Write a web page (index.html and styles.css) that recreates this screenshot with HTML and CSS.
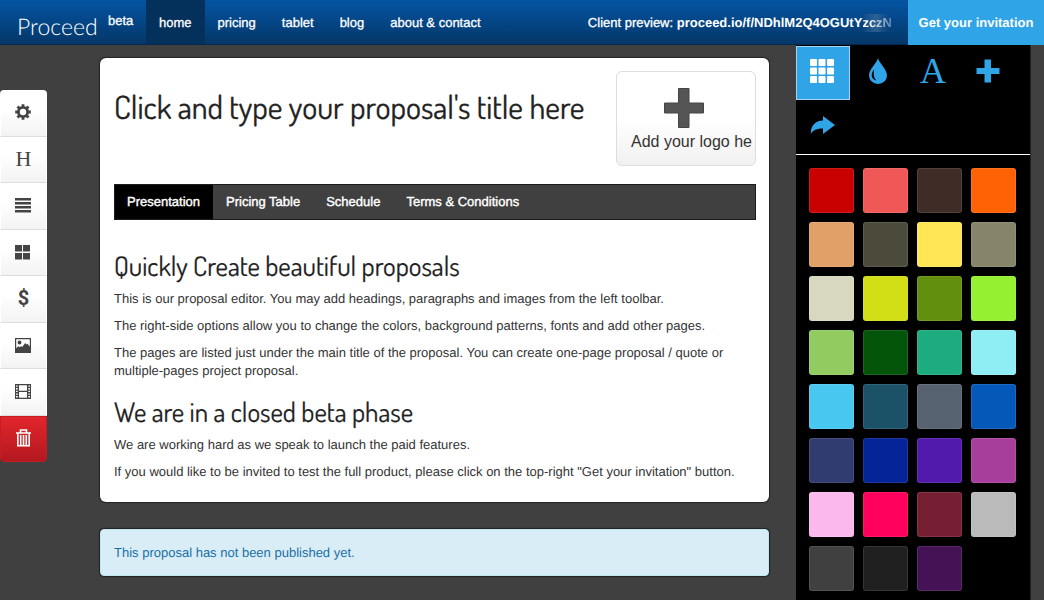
FILE: index.html
```html
<!DOCTYPE html>
<html lang="en">
<head>
<meta charset="utf-8">
<title>Proceed</title>
<meta name="viewport" content="width=device-width, initial-scale=1">
<link rel="stylesheet" href="styles.css">
</head>
<body>
<header class="topbar">
  <a class="brand" href="#">Proceed</a>
  <span class="beta">beta</span>
  <nav class="mainnav">
    <a class="active" href="#">home</a>
    <a href="#">pricing</a>
    <a href="#">tablet</a>
    <a href="#">blog</a>
    <a href="#">about &amp; contact</a>
  </nav>
  <p class="preview">Client preview: <a href="#">proceed.io/f/NDhlM2Q4OGUtY<span class="fade">zczN</span></a></p>
  <a class="invite" href="#">Get your invitation</a>
</header>
<div class="workspace">
  <div class="tools" role="toolbar" aria-label="Add content">
    <button type="button" aria-label="Settings"><svg viewBox="0 0 18 18" width="18" height="18"><g fill="currentColor"><circle cx="9" cy="9" r="6"/><path d="M7.6 1.2h2.8v15.6H7.6z"/><path d="M7.6 1.2h2.8v15.6H7.6z" transform="rotate(45 9 9)"/><path d="M7.6 1.2h2.8v15.6H7.6z" transform="rotate(90 9 9)"/><path d="M7.6 1.2h2.8v15.6H7.6z" transform="rotate(135 9 9)"/></g><circle cx="9" cy="9" r="3.2" fill="#fdfdfd"/></svg></button>
    <button type="button" class="heading-tool" aria-label="Heading">H</button>
    <button type="button" aria-label="Paragraph"><svg viewBox="0 0 18 18" width="18" height="18"><path fill="currentColor" d="M1 2h16v2.500H1zM1 6h16v2.500H1zM1 10h16v2.500H1zM1 14h16v2.500H1z"/></svg></button>
    <button type="button" aria-label="Columns"><svg viewBox="0 0 18 18" width="18" height="18"><path fill="currentColor" d="M1 2h7v6.500H1zM9 2h7v6.500H9zM1 10h7v6.500H1zM9 10h7v6.500H9z"/></svg></button>
    <button type="button" class="price-tool" aria-label="Price">$</button>
    <button type="button" aria-label="Image"><svg viewBox="0 0 18 18" width="18" height="18"><path fill="currentColor" fill-rule="evenodd" d="M1 2h16v15H1zM2.200 3.200v9l2-2 1.500 1 1.200-1.200 1.300 1 3-4 1.300 1.500 1-.8 2.300 3V3.200z"/><circle cx="5.500" cy="6.500" r="1.900" fill="currentColor"/></svg></button>
    <button type="button" aria-label="Video"><svg viewBox="0 0 18 18" width="18" height="18"><path fill="currentColor" fill-rule="evenodd" d="M1 2h16v15H1zM5 3.200v5.600h8V3.200zM5 10v5.800h8V10zM2 3.400v1.400h1.700V3.400zM2 6v1.400h1.700V6zM2 8.700v1.400h1.700V8.700zM2 11.400v1.400h1.700v-1.400zM2 14v1.400h1.700V14zM14.300 3.400v1.400H16V3.400zM14.300 6v1.400H16V6zM14.300 8.700v1.400H16V8.700zM14.300 11.400v1.400H16v-1.400zM14.300 14v1.400H16V14z"/></svg></button>
    <button type="button" class="trash" aria-label="Delete"><svg viewBox="0 0 18 20" width="18" height="20"><g fill="none" stroke="currentColor" stroke-width="1.600"><path d="M2 5h15M6.500 4.500V2h6v2.500M3.800 5v12.700h11.400V5M6.700 7v10M9.500 7v10M12.300 7v10"/></g></svg></button>
  </div>

  <main class="content">
    <article class="sheet">
      <div class="sheet-head">
        <h1 contenteditable="true" spellcheck="false">Click and type your proposal's title here</h1>
        <button type="button" class="logo-drop"><svg viewBox="0 0 40 40" width="40" height="40"><path fill="#555" stroke="#444" d="M14.500.5h10.500V15h14.500v10H25v14.500H14.500V25H.5V15h14z"/></svg><span>Add your logo he</span></button>
      </div>
      <nav class="pages">
        <a class="active" href="#">Presentation</a>
        <a href="#">Pricing Table</a>
        <a href="#">Schedule</a>
        <a href="#">Terms &amp; Conditions</a>
      </nav>
      <section>
        <h2>Quickly Create beautiful proposals</h2>
        <p>This is our proposal editor. You may add headings, paragraphs and images from the left toolbar.</p>
        <p>The right-side options allow you to change the colors, background patterns, fonts and add other pages.</p>
        <p>The pages are listed just under the main title of the proposal. You can create one-page proposal / quote or multiple-pages project proposal.</p>
      </section>
      <section>
        <h2>We are in a closed beta phase</h2>
        <p>We are working hard as we speak to launch the paid features.</p>
        <p>If you would like to be invited to test the full product, please click on the top-right "Get your invitation" button.</p>
      </section>
    </article>
    <p class="notice">This proposal has not been published yet.</p>
  </main>

  <aside class="panel">
    <div class="tabs">
      <button type="button" class="active" aria-label="Colors"><svg viewBox="0 0 24 24" width="24" height="24"><g fill="currentColor"><rect width="7" height="7" rx="1"/><rect x="8.500" width="7" height="7" rx="1"/><rect x="17" width="7" height="7" rx="1"/><rect y="8.500" width="7" height="7" rx="1"/><rect x="8.500" y="8.500" width="7" height="7" rx="1"/><rect x="17" y="8.500" width="7" height="7" rx="1"/><rect y="17" width="7" height="7" rx="1"/><rect x="8.500" y="17" width="7" height="7" rx="1"/><rect x="17" y="17" width="7" height="7" rx="1"/></g></svg></button>
      <button type="button" aria-label="Background"><svg viewBox="0 0 20 28" width="20" height="28"><path fill="currentColor" d="M10 1c1 5 9 11 9 17.500a9 8.500 0 0 1-18 0C1 12 9 6 10 1z"/><path fill="#000" d="M6 12.500c-4 5-2.500 10 2.500 11C5.500 21 5.500 17 6 12.500z"/></svg></button>
      <button type="button" class="font-tab" aria-label="Fonts">A</button>
      <button type="button" aria-label="Add page"><svg viewBox="0 0 24 24" width="24" height="24"><path fill="currentColor" d="M8.500.5h6.500v8.500h8.500v6H15v8.500H8.500V15H.5V9h8z"/></svg></button>
      <button type="button" aria-label="Share"><svg viewBox="0 0 26 20" width="26" height="20"><path fill="currentColor" d="M13 1l12 9-12 9v-5.500C7 13.500 3 15 .8 19 .5 10 6 5.500 13 5.500z"/></svg></button>
    </div>
    <div class="swatches">
      <button type="button" class="c01" aria-label="Red"></button>
      <button type="button" class="c02" aria-label="Coral"></button>
      <button type="button" class="c03" aria-label="Brown"></button>
      <button type="button" class="c04" aria-label="Orange"></button>
      <button type="button" class="c05" aria-label="Tan"></button>
      <button type="button" class="c06" aria-label="Dark olive"></button>
      <button type="button" class="c07" aria-label="Yellow"></button>
      <button type="button" class="c08" aria-label="Khaki"></button>
      <button type="button" class="c09" aria-label="Ivory"></button>
      <button type="button" class="c10" aria-label="Lemon"></button>
      <button type="button" class="c11" aria-label="Olive green"></button>
      <button type="button" class="c12" aria-label="Lime"></button>
      <button type="button" class="c13" aria-label="Light green"></button>
      <button type="button" class="c14" aria-label="Dark green"></button>
      <button type="button" class="c15" aria-label="Emerald"></button>
      <button type="button" class="c16" aria-label="Aqua"></button>
      <button type="button" class="c17" aria-label="Sky blue"></button>
      <button type="button" class="c18" aria-label="Petrol"></button>
      <button type="button" class="c19" aria-label="Slate"></button>
      <button type="button" class="c20" aria-label="Blue"></button>
      <button type="button" class="c21" aria-label="Indigo"></button>
      <button type="button" class="c22" aria-label="Royal blue"></button>
      <button type="button" class="c23" aria-label="Violet"></button>
      <button type="button" class="c24" aria-label="Orchid"></button>
      <button type="button" class="c25" aria-label="Light pink"></button>
      <button type="button" class="c26" aria-label="Hot pink"></button>
      <button type="button" class="c27" aria-label="Burgundy"></button>
      <button type="button" class="c28" aria-label="Silver"></button>
      <button type="button" class="c29" aria-label="Charcoal"></button>
      <button type="button" class="c30" aria-label="Black"></button>
      <button type="button" class="c31" aria-label="Purple"></button>
    </div>
  </aside>
</div>
</body>
</html>
```

FILE: styles.css
```css
* { box-sizing: border-box; }
body {
  margin: 0;
  min-height: 100vh;
  display: flex;
  flex-direction: column;
  background: #404040;
  color: #333;
  font: 13px/18px "Liberation Sans", Arial, sans-serif;
  text-rendering: geometricPrecision;
}
a { color: inherit; text-decoration: none; }
button { font: inherit; color: inherit; margin: 0; padding: 0; border: 0; cursor: pointer; }
svg { display: block; }
h1, h2, p { margin: 0; }

.topbar {
  display: flex;
  height: 45px;
  background: linear-gradient(#0454a3, #043768);
  border-bottom: 1px solid #032a50;
  color: #fff;
  line-height: 46px;
  white-space: nowrap;
  -webkit-text-stroke: 0.3px currentColor;
}
.brand {
  padding: 4px 0 0 17px;
  width: 108px;
  font: 300 23px/44px Lato, sans-serif;
  -webkit-text-stroke: 0;
}
.beta { width: 38px; line-height: 42px; }
.mainnav { display: flex; }
.mainnav a { height: 44px; padding: 0 13px; }
.mainnav .active { background: #04305c; }
.preview { margin-left: auto; padding-right: 16px; }
.preview a { font-weight: bold; -webkit-text-stroke: 0; }
.fade {
  display: inline-block;
  height: 18px;
  line-height: 18px;
  background: linear-gradient(90deg, #2e66a000, #3c6797 50%, #2e5e9200);
  mask-image: linear-gradient(90deg, #000 20%, rgba(0, 0, 0, 0.3));
}
.invite { width: 136px; margin-bottom: -1px; text-align: center; font-weight: bold; background: #2fa4e7; -webkit-text-stroke: 0; }

.workspace { flex: 1; display: flex; align-items: flex-start; }
.tools {
  width: 47px;
  margin-top: 45px;
  display: flex;
  flex-direction: column;
  border-radius: 4px;
  overflow: hidden;
  color: #444;
}
.tools button {
  height: 47px;
  display: grid;
  place-items: center;
  padding: 0 2px 3px 0;
  background: linear-gradient(#fff 40%, #f3f3f3);
  border: 1px solid #fff;
  border-bottom-color: #ddd;
}
.tools button:nth-child(even) { height: 46px; }
.tools .heading-tool { padding-right: 0; font: 22px/24px "Liberation Serif", serif; }
.tools .price-tool { padding-right: 0; font: bold 20px/24px Roboto, sans-serif; }
.tools .trash { height: 47px; color: #fff; background: linear-gradient(#e1262c, #b4181f); border-color: #c51d23; border-radius: 0 0 4px 4px; }

.content { flex: 1; min-width: 0; margin: 13px 27px 24px 53px; }
.sheet {
  padding: 13px 13px 12px 14px;
  background: #fff;
  border-radius: 6px;
  box-shadow: 0 0 1px 1px #222;
}
.sheet-head { display: flex; justify-content: space-between; align-items: flex-start; margin-bottom: 18px; }
h1, h2 { font-family: Dosis, "Liberation Sans Narrow", Roboto, sans-serif; font-weight: 400; color: #222; }
h1 { padding-top: 16px; font-size: 32px; line-height: 40px; white-space: nowrap; outline: none; -webkit-text-stroke: 0.3px currentColor; }
.logo-drop {
  flex: none;
  width: 140px;
  height: 95px;
  padding: 6px 0 0 14px;
  text-align: left;
  background: linear-gradient(#fff 50%, #f1f1f1);
  border: 1px solid #ddd;
  border-radius: 6px;
  font-size: 16px;
  line-height: 28px;
  white-space: nowrap;
}
.logo-drop svg { margin-left: 33px; }
.pages {
  display: flex;
  margin-bottom: 26px;
  background: #404040;
  border: 1px solid #1c1c1c;
  color: #fff;
  line-height: 34px;
  -webkit-text-stroke: 0.4px currentColor;
}
.pages a { padding: 0 13px; }
.pages .active { background: #000; padding-left: 12px; }
h2 { font-size: 27px; line-height: 40px; -webkit-text-stroke: 0.2px currentColor; }
.sheet p { margin-bottom: 9px; }
.sheet section { margin-bottom: 12px; }
.sheet section:last-child { margin-bottom: 0; }
section h2 { margin-bottom: 4px; }
.notice {
  margin-top: 27px;
  padding: 14px 13px 13px;
  background: #d9edf7;
  border: 1px solid #bce8f1;
  border-radius: 4px;
  color: #1a6fa3;
  box-shadow: 0 0 1px 1px #222;
}

.panel { width: 235px; margin-right: 13px; align-self: stretch; background: #000; border-right: 1px solid #222; }
.tabs { display: flex; flex-wrap: wrap; align-content: flex-start; gap: 0 1px; height: 110px; padding-top: 1px; border-bottom: 1px solid #fff; color: #2fa4e7; }
.tabs button { width: 54px; height: 54px; display: grid; place-items: center; padding: 0 0 4px; background: #000; }
.tabs .active { color: #fff; background: #2fa4e7; border: 1px solid #a5d5f3; padding-right: 2px; }
.tabs .font-tab { font: 36px/48px "Liberation Serif", serif; }
.swatches { display: grid; grid-template-columns: repeat(4, 45px); gap: 9px; padding: 13px 13px 10px; }
.swatches button { height: 45px; border: 1px solid rgba(255, 255, 255, 0.1); border-radius: 3px; }
.c01 { background: #c80000; }
.c02 { background: #f05858; }
.c03 { background: #402c26; }
.c04 { background: #ff6204; }
.c05 { background: #e0a068; }
.c06 { background: #4c4a3a; }
.c07 { background: #fee654; }
.c08 { background: #86846a; }
.c09 { background: #d8d8c0; }
.c10 { background: #d2de16; }
.c11 { background: #62900e; }
.c12 { background: #94f030; }
.c13 { background: #92cc60; }
.c14 { background: #04540a; }
.c15 { background: #1cac80; }
.c16 { background: #8eeef4; }
.c17 { background: #48c8f0; }
.c18 { background: #1c5268; }
.c19 { background: #566270; }
.c20 { background: #0458b8; }
.c21 { background: #303c70; }
.c22 { background: #042498; }
.c23 { background: #521aac; }
.c24 { background: #a83e9c; }
.c25 { background: #fab8ec; }
.c26 { background: #ff005c; }
.c27 { background: #761e32; }
.c28 { background: #bababa; }
.c29 { background: #404040; }
.c30 { background: #202020; }
.c31 { background: #461256; }
```
